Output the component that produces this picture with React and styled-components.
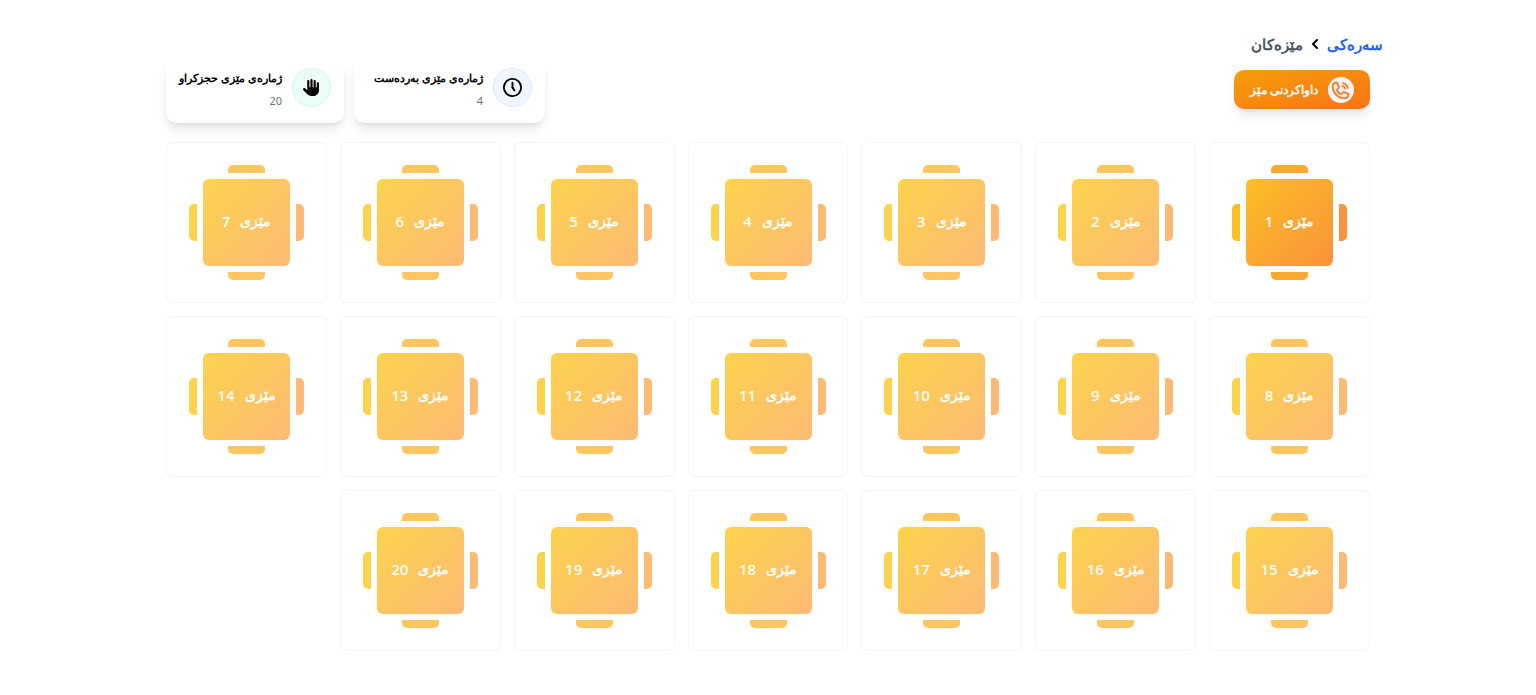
import React from 'react'
import styled, {createGlobalStyle} from 'styled-components'
import {FaHand} from 'react-icons/fa6'
import {FiChevronLeft} from 'react-icons/fi'
import {PiPhoneCall} from 'react-icons/pi'
import {TbClockHour5} from 'react-icons/tb'

const GlobalStyle = createGlobalStyle`
  * {
    box-sizing: border-box;
  }

  body {
    margin: 0;
    background: #fff;
    color: #000;
    font-family: 'Noto Sans';
  }
`

const Page = styled.main`
  max-width: 1230px;
  margin: 0 auto;
  padding: 30px 0 44px;
`

const Breadcrumb = styled.nav`
  display: flex;
  align-items: center;
  gap: 4px;
  height: 28px;
  font-size: 15px;
  line-height: 24px;
  font-weight: 600;
  color: #4b5563;

  a {
    color: #2563eb;
    text-decoration: none;
  }

  svg {
    color: #000;
  }
`

const Header = styled.header`
  display: flex;
  justify-content: space-between;
  align-items: flex-start;
  padding: 0 13px;
`

const CallButton = styled.button`
  display: flex;
  align-items: center;
  gap: 10px;
  height: 39px;
  margin-top: 12px;
  padding: 0 16px;
  border: 0;
  border-radius: 10px;
  background: linear-gradient(to bottom right, #f59e0b, #f97316);
  box-shadow: 0 8px 12px -2px rgba(0, 0, 0, 0.1), 0 3px 5px -3px rgba(0, 0, 0, 0.1);
  color: #fff;
  font: inherit;
  font-size: 12px;
  font-weight: 600;
  cursor: pointer;
`

const CallIcon = styled.span`
  display: grid;
  place-items: center;
  width: 26px;
  height: 26px;
  border-radius: 50%;
  background: #f3f4f6;
  color: #f97316;
`

const Stats = styled.div`
  display: flex;
  gap: 10px;
`

const StatCard = styled.div`
  display: flex;
  align-items: center;
  gap: 10px;
  min-width: ${(props) => (props.$wide ? '191px' : '178px')};
  height: 65px;
  padding: 0 13px 6px 12px;
  border-radius: 10px;
  box-shadow: 0 8px 12px -2px rgba(0, 0, 0, 0.1), 0 3px 5px -3px rgba(0, 0, 0, 0.1);
`

const StatIcon = styled.span`
  display: grid;
  place-items: center;
  width: 39px;
  height: 39px;
  border: 1px solid ${(props) => (props.$green ? '#d1fae5' : '#dbeafe')};
  border-radius: 50%;
  background: ${(props) => (props.$green ? '#ecfdf5' : '#eff6ff')};
`

const StatTitle = styled.h2`
  margin: 0;
  padding-top: 1px;
  font-size: 11px;
  line-height: 20px;
  font-weight: 600;
`

const StatValue = styled.p`
  margin: 5px 0 0;
  color: #6b7280;
  font-size: 11px;
  line-height: 16px;
`

const Grid = styled.section`
  display: grid;
  grid-template-columns: repeat(7, 1fr);
  gap: 13px;
  padding: 19px 13px 0;
`

const TableCard = styled.button`
  display: grid;
  grid-template-columns: 8px 87px 8px;
  grid-template-rows: 8px 87px 8px;
  gap: 6px;
  place-content: center;
  place-items: center;
  aspect-ratio: 1;
  padding: 0;
  border: 1px solid #f3f4f6;
  border-radius: 6px;
  background: #fff;
  font: inherit;
  cursor: pointer;
  --from: ${(props) => (props.$open ? '#fbbf24' : '#fcd34d')};
  --middle: ${(props) => (props.$open ? '#fba930' : '#fdc661')};
  --to: ${(props) => (props.$open ? '#fb923c' : '#fdba74')};
`

const chairs = {
  top: 'grid-area: 1 / 2; width: 37px; height: 8px; background: var(--middle); border-radius: 5px 5px 0 0;',
  bottom: 'grid-area: 3 / 2; width: 37px; height: 8px; background: var(--middle); border-radius: 0 0 5px 5px;',
  right: 'grid-area: 2 / 1; width: 8px; height: 37px; background: var(--to); border-radius: 0 5px 5px 0;',
  left: 'grid-area: 2 / 3; width: 8px; height: 37px; background: var(--from); border-radius: 5px 0 0 5px;',
}

const Chair = styled.span`
  ${(props) => chairs[props.$side]}
`

const TableTop = styled.span`
  grid-area: 2 / 2;
  display: flex;
  justify-content: center;
  align-items: center;
  gap: 10px;
  width: 100%;
  height: 100%;
  padding-bottom: 2px;
  border-radius: 6px;
  background: linear-gradient(to bottom right, var(--from), var(--to));
  color: #fff;
  font-size: 15px;
  line-height: 24px;
  font-weight: 500;
`

const TableLabel = styled.span`
  font-size: 14px;
  font-weight: 600;
`

const tables = Array.from({length: 20}, (_, i) => i + 1)

function Stat({icon, title, value, green, wide}) {
  return (
    <StatCard $wide={wide}>
      <StatIcon $green={green}>{icon}</StatIcon>
      <div>
        <StatTitle>{title}</StatTitle>
        <StatValue>{value}</StatValue>
      </div>
    </StatCard>
  )
}

export default function App() {
  return (
    <Page dir="rtl" lang="ckb">
      <GlobalStyle />
      <Breadcrumb>
        <a href="#home">سەرەکی</a>
        <FiChevronLeft size={16} strokeWidth={3} />
        <span>مێزەکان</span>
      </Breadcrumb>
      <Header>
        <CallButton type="button">
          <CallIcon>
            <PiPhoneCall size={22} strokeWidth={5} />
          </CallIcon>
          داواکردنی مێز
        </CallButton>
        <Stats>
          <Stat wide icon={<TbClockHour5 size={23} />} title="ژمارەی مێزی بەردەست" value={4} />
          <Stat green icon={<FaHand size={17} />} title="ژمارەی مێزی حجزکراو" value={20} />
        </Stats>
      </Header>
      <Grid>
        {tables.map((n) => (
          <TableCard key={n} type="button" $open={n === 1}>
            <Chair $side="top" />
            <Chair $side="right" />
            <TableTop>
              <TableLabel>مێزی</TableLabel>
              <span>{n}</span>
            </TableTop>
            <Chair $side="left" />
            <Chair $side="bottom" />
          </TableCard>
        ))}
      </Grid>
    </Page>
  )
}
